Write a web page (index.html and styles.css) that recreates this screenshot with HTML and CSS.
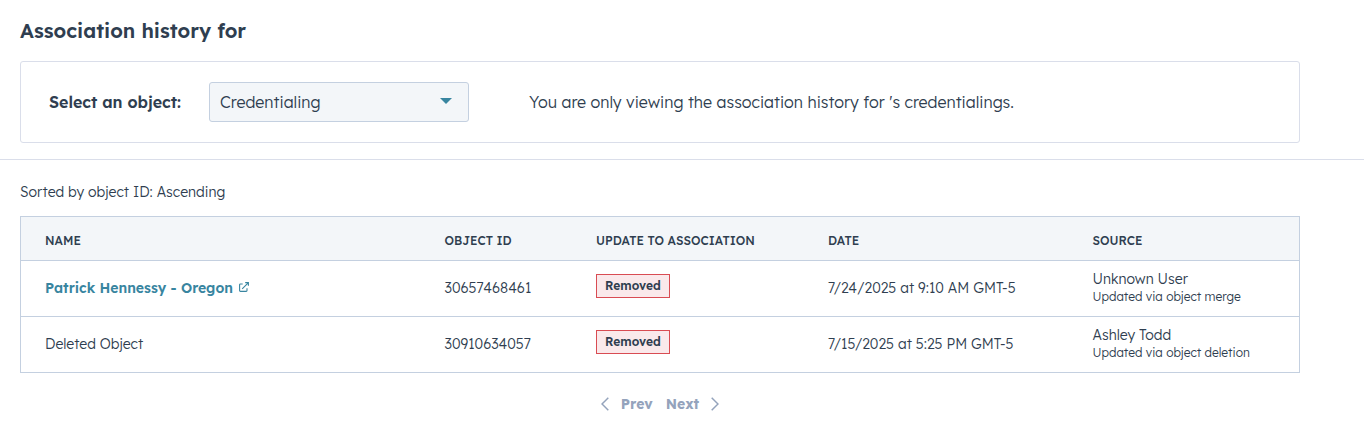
FILE: index.html
```html
<!DOCTYPE html>
<html lang="en">
<head>
<meta charset="utf-8">
<title>Association history</title>
<link rel="stylesheet" href="styles.css">
</head>
<body>
<header class="page-header">
  <h1 class="title">Association history for</h1>
  <section class="filter">
    <span class="filter-label">Select an object:</span>
    <button class="select" type="button"><span class="select-value">Credentialing</span><svg class="caret" width="12" height="6" viewBox="0 0 12 6"><path d="M0 0h12L6 6z"/></svg></button>
    <p class="filter-note">You are only viewing the association history for 's credentialings.</p>
  </section>
</header>
<main class="content">
  <p class="sorted">Sorted by object ID: Ascending</p>
  <div class="table">
    <div class="row head">
      <span class="h-name">NAME</span><span class="h-id">OBJECT ID</span><span class="h-update">UPDATE TO ASSOCIATION</span><span class="h-date">DATE</span><span class="h-source">SOURCE</span>
    </div>
    <div class="row">
      <a class="link"><span class="link-text">Patrick Hennessy - Oregon</span><svg class="external" width="10" height="10" viewBox="0 0 10 10"><path d="M3.7 2H1.4q-.8 0-.8.8v5.8q0 .8.8.8h5.8q.8 0 .8-.8V6.2M3.2 6.8 9.2.8M6.2.6h3.2v3.2"/></svg></a>
      <span class="id">30657468461</span>
      <span class="tag">Removed</span>
      <span class="date">7/24/2025 at 9:10 AM GMT-5</span>
      <div class="source"><span class="user">Unknown User</span><small class="via">Updated via object merge</small></div>
    </div>
    <div class="row">
      <span class="name">Deleted Object</span>
      <span class="id">30910634057</span>
      <span class="tag">Removed</span>
      <span class="date">7/15/2025 at 5:25 PM GMT-5</span>
      <div class="source"><span class="user">Ashley Todd</span><small class="via">Updated via object deletion</small></div>
    </div>
  </div>
  <nav class="pager">
    <svg class="chevron" width="8" height="14" viewBox="0 0 8 14"><path d="M7.3.7 1 7l6.3 6.3"/></svg>
    <span class="prev">Prev</span>
    <span class="next">Next</span>
    <svg class="chevron" width="8" height="14" viewBox="0 0 8 14"><path d="M.7.7 7 7 .7 13.3"/></svg>
  </nav>
</main>
</body>
</html>
```
FILE: styles.css
```css
* { box-sizing: border-box; }
body {
  margin: 0;
  background: #fff;
  color: #2f3e50;
  font-family: "Lexend Deca", Lexend, Inter, sans-serif;
  font-size: 14px;
  line-height: 24px;
  font-weight: 300;
  white-space: nowrap;
}
p, h1 { margin: 0; }
.page-header {
  height: 160px;
  padding: 16px 64px 0 20px;
  border-bottom: 1px solid #dadeea;
}
.title { font-size: 20px; line-height: 30px; font-weight: 600; }
.filter {
  display: flex;
  align-items: center;
  height: 82px;
  margin-top: 15px;
  padding-left: 28px;
  border: 1px solid #dadeea;
  border-radius: 3px;
  font-size: 16px;
}
.filter-label { width: 160px; font-weight: 600; }
.select {
  display: flex;
  align-items: center;
  justify-content: space-between;
  width: 260px;
  height: 40px;
  margin-right: 60px;
  padding: 0 16px 0 10px;
  border: 1px solid #c4d0e0;
  border-radius: 3px;
  background: #f3f6f9;
  color: inherit;
  font: inherit;
}
.caret { fill: #3885a0; margin-bottom: 2px; }
.content { padding: 20px 64px 0 20px; }
.table { margin-top: 12px; border: 1px solid #c4d0e0; }
.row {
  display: grid;
  grid-template-columns: 399.5px 151.5px 232px 264.5px 1fr;
  align-items: center;
  height: 56px;
  padding: 0 24px 2px;
}
.row + .row { border-top: 1px solid #c4d0e0; }
.head {
  height: 43px;
  padding: 4px 24px 0;
  background: #f3f6f9;
  font-size: 12px;
  font-weight: 500;
}
.link { display: flex; align-items: center; gap: 6px; color: #3885a0; font-weight: 600; }
.external { margin-bottom: 1px; fill: none; stroke: #3885a0; stroke-width: 1.1; }
.tag {
  justify-self: start;
  width: 74px;
  height: 24px;
  margin-bottom: 3px;
  border: 1px solid #d94c53;
  background: #fae9eb;
  font-size: 12px;
  line-height: 22px;
  font-weight: 600;
  text-align: center;
}
.source { display: flex; flex-direction: column; }
.user { line-height: 18px; }
.via { font-size: 12px; line-height: 17px; }
.pager {
  display: flex;
  justify-content: center;
  align-items: center;
  margin-top: 19px;
  color: #94a3bc;
  font-weight: 700;
}
.prev { margin: 0 13px 0 12px; }
.next { margin-right: 12px; }
.chevron { fill: none; stroke: #94a3bc; stroke-width: 1.5; }
```
